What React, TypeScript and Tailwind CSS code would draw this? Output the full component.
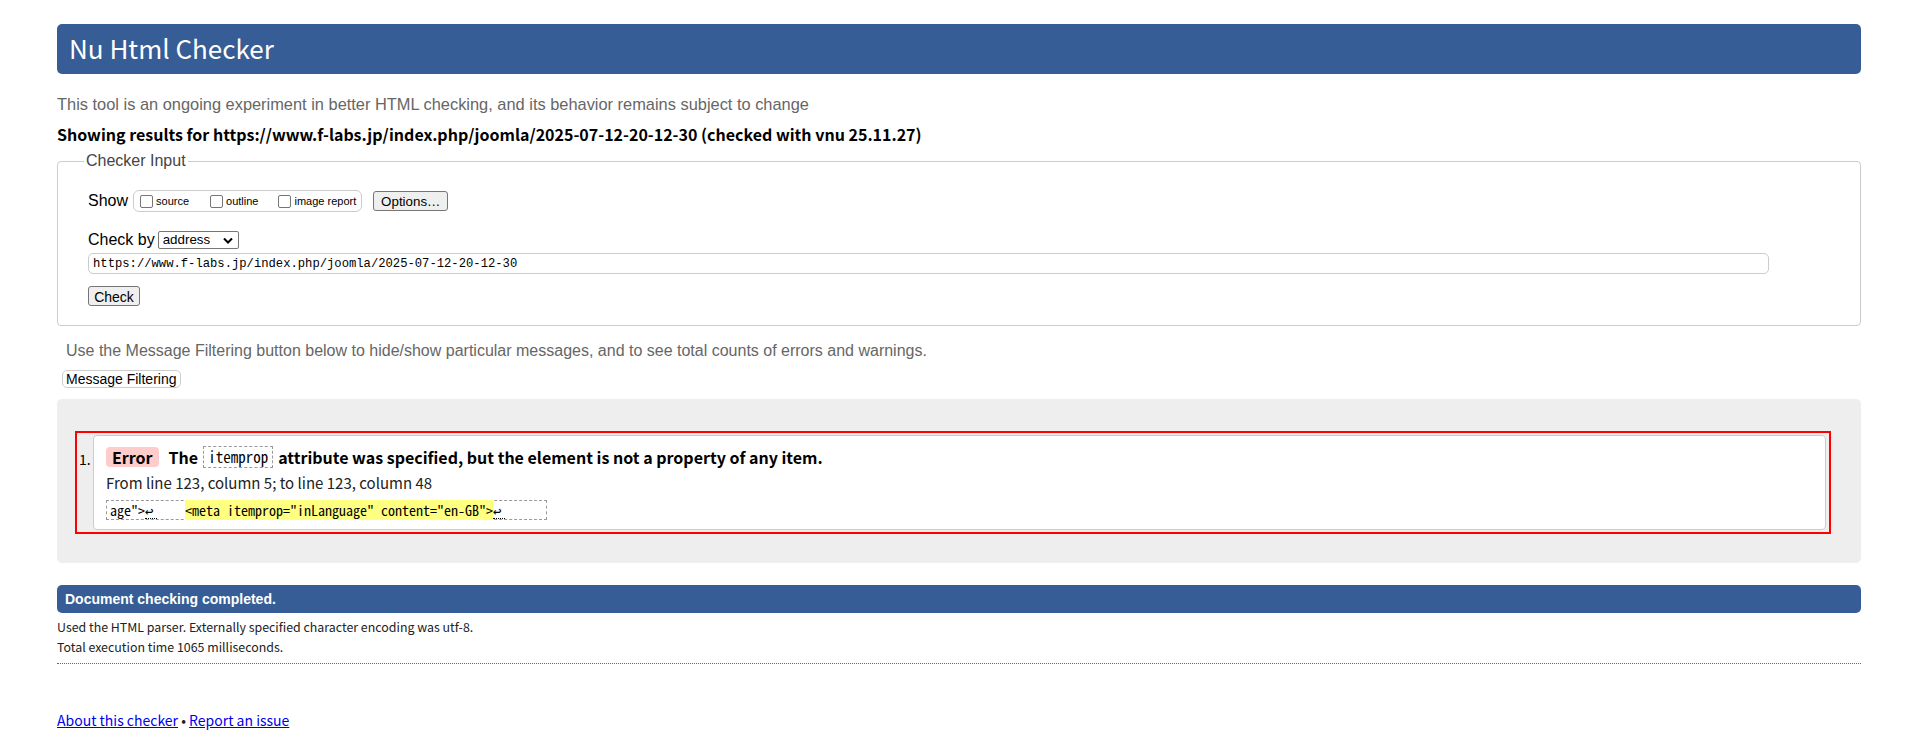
const sans = "font-['Noto_Sans_CJK_JP','Noto_Sans',sans-serif]"
const arial = "font-['Liberation_Sans',Arial,sans-serif]"
const mono = "font-['Noto_Sans_Mono_CJK_JP','Liberation_Mono',monospace]"

function Option({ label, className = '' }: { label: string; className?: string }) {
  return (
    <label className={`flex items-center ${className}`}>
      <input
        type="checkbox"
        className="h-[13px] w-[13px] appearance-none rounded-[2px] border border-[#767676] bg-white"
      />
      <span className="ml-[3px] text-[11px] leading-[13px]">{label}</span>
    </label>
  )
}

function Return() {
  return <span className="inline-block w-[12px] border-b border-dotted border-black leading-[15px]">↩</span>
}

export default function App() {
  return (
    <div className="min-h-[750px] bg-white pl-[57px] pr-[59px] pt-[24px] text-black">
      {/* header */}
      <h1
        className={`${sans} h-[50px] rounded-[5px] bg-[#365d95] pl-[12px] text-[26px] font-normal leading-[47px] text-white`}
      >
        Nu Html Checker
      </h1>
      <p className={`${arial} mt-[20px] text-[16.4px] leading-[20px] text-[#666]`}>
        This tool is an ongoing experiment in better HTML checking, and its behavior remains subject to change
      </p>
      <p className={`${sans} mt-[8px] text-[16px] font-bold leading-[24px]`}>
        Showing results for https://www.f-labs.jp/index.php/joomla/2025-07-12-20-12-30 (checked with vnu 25.11.27)
      </p>

      {/* checker input */}
      <fieldset
        className={`${arial} mt-[6px] rounded-[4px] border border-[#ccc] pb-[19px] pl-[30px] pt-[20px]`}
      >
        <legend className="-ml-[4px] px-[2px] text-[16px] leading-[18px] text-[#444]">Checker Input</legend>
        <div className="flex h-[22px] items-center">
          <span className="text-[16px]">Show</span>
          <div className="ml-[5px] flex h-[22px] items-center rounded-[6px] border border-[#ccc] pl-[6px] pr-[5px]">
            <Option label="source" />
            <Option label="outline" className="ml-[21px]" />
            <Option label="image report" className="ml-[20px]" />
          </div>
          <button className="ml-[11px] h-[20px] w-[75px] rounded-[3px] border border-[#767676] bg-[#efefef] text-[13.33px]">
            Options…
          </button>
        </div>
        <div className="mt-[19px] flex h-[18px] items-center">
          <span className="text-[16px]">Check by</span>
          <span className="ml-[3px] flex h-[18px] w-[81px] items-center justify-between rounded-[2px] border border-[#767676] pl-[4px] pr-[5px] text-[13.33px]">
            address
            <svg width="10" height="7" viewBox="0 0 10 7" fill="none">
              <path d="M1 1.5l4 4 4-4" stroke="#000" strokeWidth="2" />
            </svg>
          </span>
        </div>
        <input
          readOnly
          defaultValue="https://www.f-labs.jp/index.php/joomla/2025-07-12-20-12-30"
          className="mt-[4px] block h-[21px] w-[1681px] rounded-[5px] border border-[#ccc] pl-[4px] font-['Liberation_Mono',monospace] text-[12.2px] outline-none"
        />
        <button className="mt-[12px] block h-[20px] w-[52px] rounded-[3px] border border-[#767676] bg-[#efefef] text-[14px]">
          Check
        </button>
      </fieldset>

      <p className={`${arial} ml-[9px] mt-[15px] text-[16px] leading-[20px] text-[#666]`}>
        Use the Message Filtering button below to hide/show particular messages, and to see total counts of errors and warnings.
      </p>
      <button
        className={`${arial} ml-[5px] mt-[9px] block h-[18px] rounded-[5px] border border-[#ccc] bg-white px-[3px] text-[14px] leading-[16px]`}
      >
        Message Filtering
      </button>

      {/* results */}
      <div className="mt-[11px] rounded-[5px] bg-[#eee] pb-[29px] pl-[18px] pr-[30px] pt-[32px]">
        <div className="flex border-2 border-[#f00] pb-[2px] pr-[3px] pt-[2px]">
          <div className={`${sans} w-[16px] pl-[2px] pt-[14px] text-[14px] leading-[20px]`}>1.</div>
          <div className="flex-1 rounded-[4px] border border-[#ccc] bg-white pb-[9px] pl-[12px] pt-[10px]">
            <div className={`${sans} flex h-[22px] items-center text-[16px] font-bold`}>
              <span className="flex h-[20px] items-center rounded-[4px] bg-[#ffcccc] px-[6px]">Error</span>
              <span className="ml-[10px]">The</span>
              <code
                className={`${mono} ml-[5px] flex h-[22px] items-center border border-dashed border-[#999] px-[4px] text-[15px] font-normal`}
              >
                itemprop
              </code>
              <span className="ml-[5px]">attribute was specified, but the element is not a property of any item.</span>
            </div>
            <p className={`${sans} mt-[5px] text-[15px] leading-[20px] text-[#222]`}>
              From line 123, column 5; to line 123, column 48
            </p>
            <div
              className={`${mono} mt-[7px] h-[20px] w-[441px] whitespace-pre border border-dashed border-[#999] px-[3px] text-[14px] leading-[18px]`}
            >
              age"&gt;<Return />{'    '}
              <mark className="bg-[#ffff80] text-black">&lt;meta itemprop="inLanguage" content="en-GB"&gt;</mark>
              <Return />
            </div>
          </div>
        </div>
      </div>

      {/* summary */}
      <div
        className={`${arial} mt-[22px] h-[28px] rounded-[5px] bg-[#365d95] pl-[8px] text-[14px] font-bold leading-[28px] text-white`}
      >
        Document checking completed.
      </div>
      <div className={`${sans} mt-[4px] border-b border-dotted border-[#666] pb-[6px] text-[12.4px] leading-[20px] text-[#222]`}>
        <p>Used the HTML parser. Externally specified character encoding was utf-8.</p>
        <p>Total execution time 1065 milliseconds.</p>
      </div>

      {/* footer */}
      <p className={`${sans} mt-[45px] text-[14px] leading-[22px] text-[#222]`}>
        <a href="#" className="text-[#0000ee] underline">About this checker</a> •{' '}
        <a href="#" className="text-[#0000ee] underline">Report an issue</a>
      </p>
    </div>
  )
}
